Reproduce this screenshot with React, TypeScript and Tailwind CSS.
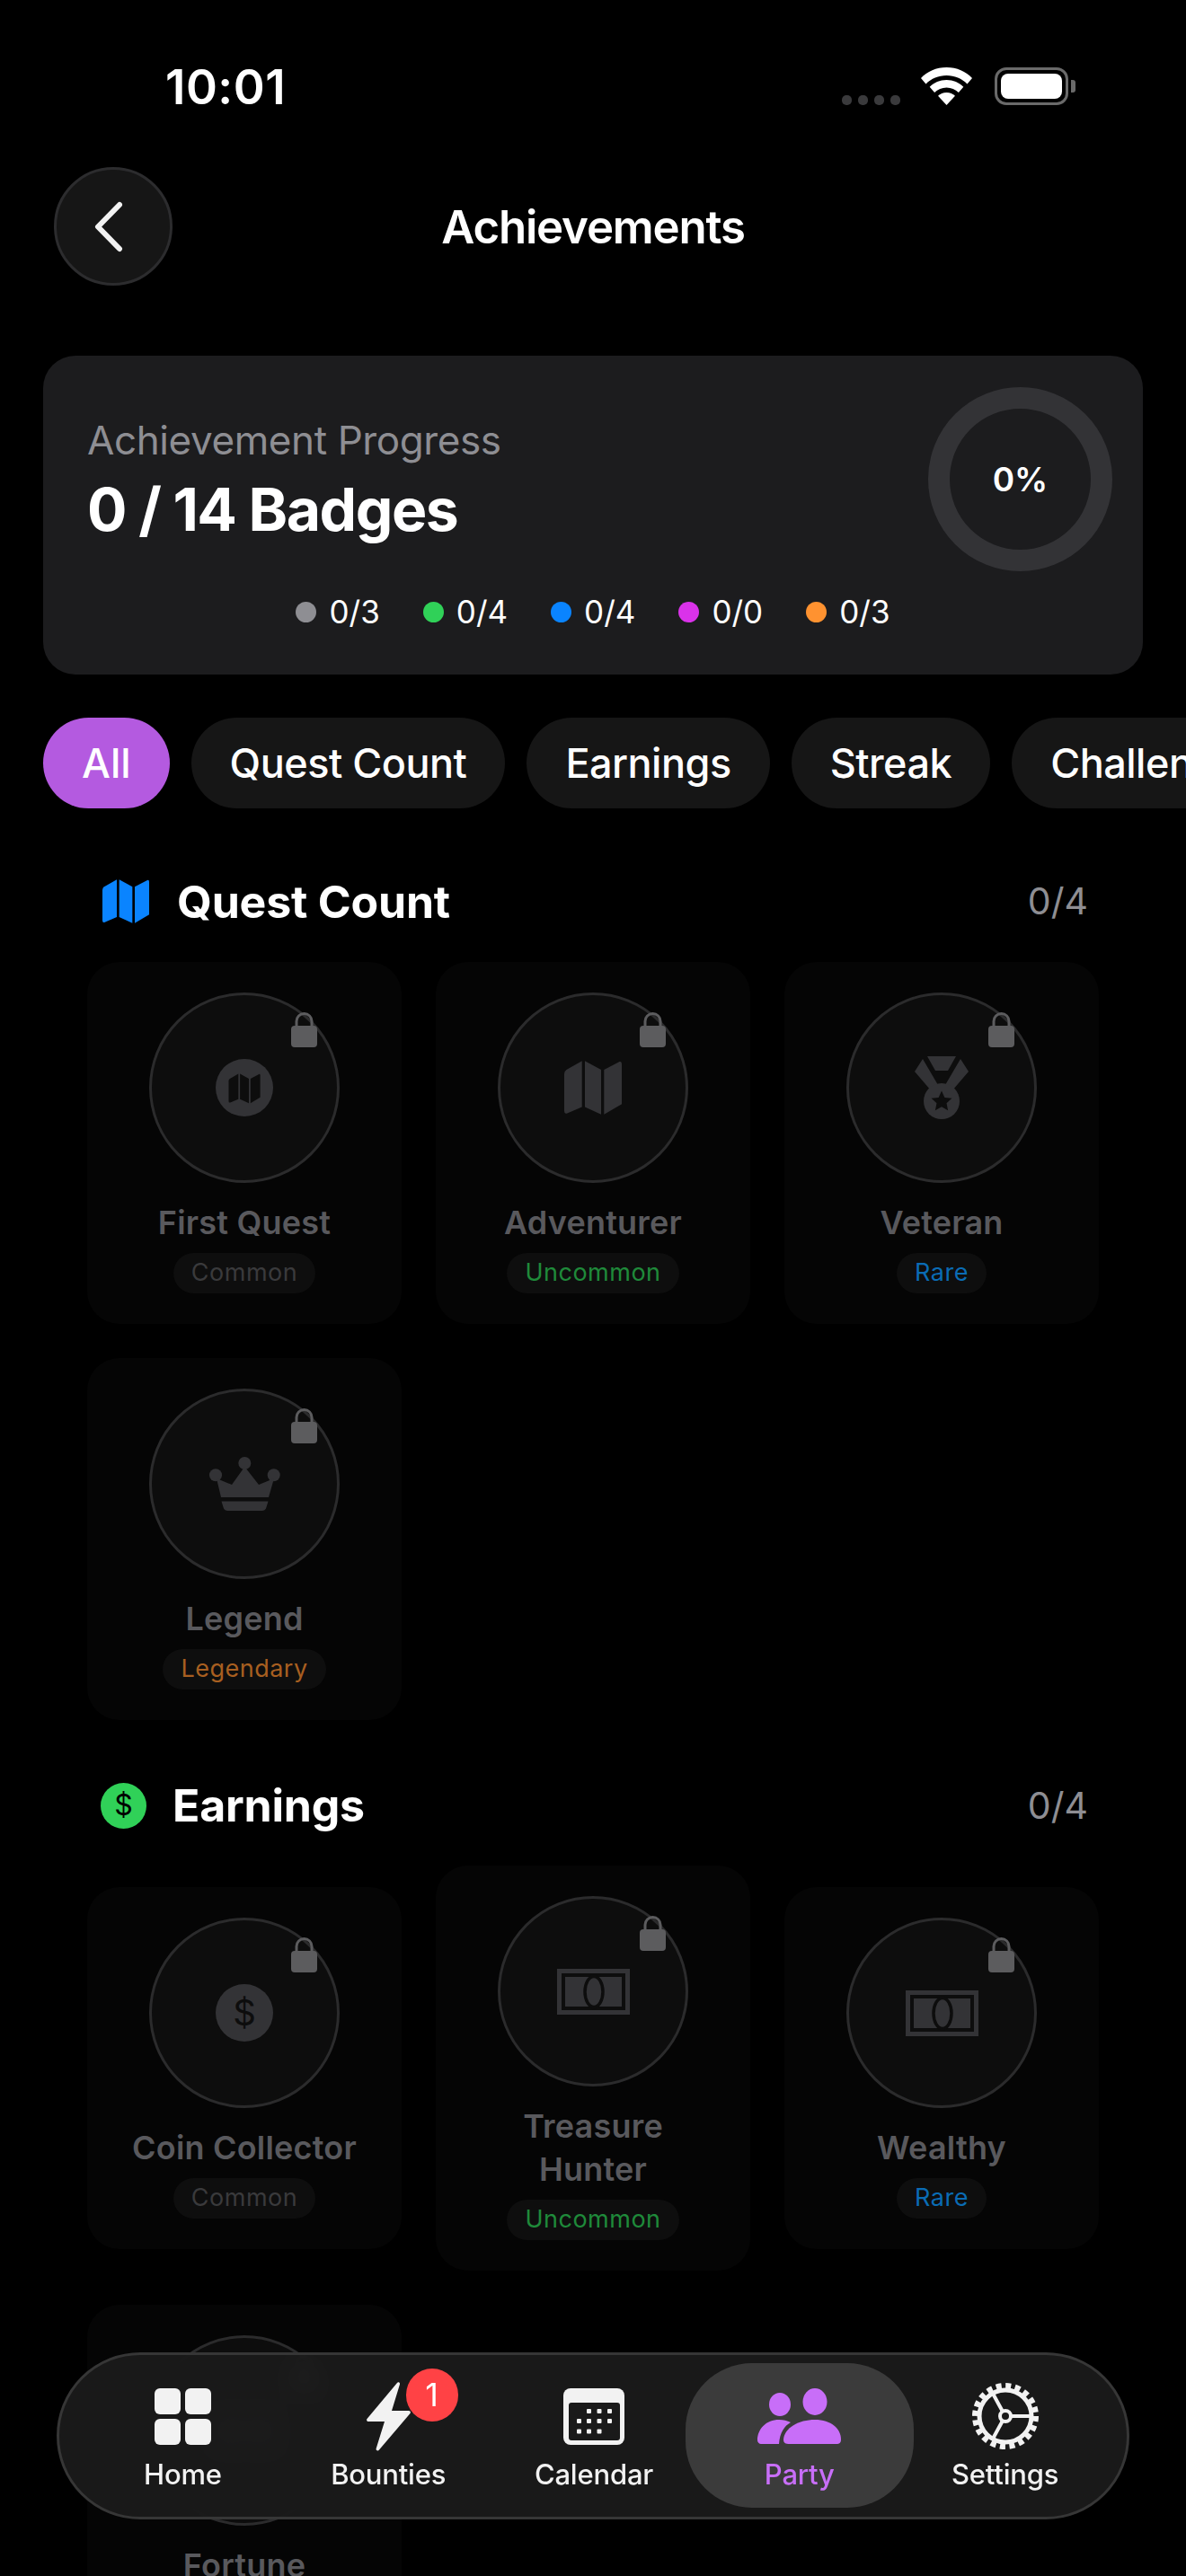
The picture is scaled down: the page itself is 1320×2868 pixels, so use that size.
import type { ReactNode } from "react";

const FONT = "font-['Inter','Liberation_Sans',sans-serif]";

const MapIcon = ({ className }: { className?: string }) => (
  <svg viewBox="0 0 156 145" className={className} fill="currentColor">
    <path d="M0 35Q0 28 6 24L48 0V125L8 142Q0 145 0 136z" />
    <path d="M56 0L100 24V145L56 125z" />
    <path d="M108 24L150 2Q156 0 156 8V117L108 145z" />
  </svg>
);

const LockIcon = () => (
  <svg viewBox="0 0 29 40" className="absolute top-[18px] right-[22px] w-[29px] h-[40px]">
    <path d="M6 19v-8a8.500 8.500 0 0 1 17 0v8" fill="none" stroke="#5c5c5e" strokeWidth="3" />
    <rect x="0" y="16" width="29" height="24" rx="4" fill="#5c5c5e" />
  </svg>
);

const MapCircle = () => (
  <svg viewBox="0 0 64 64" className="w-[64px] h-[64px]">
    <circle cx="32" cy="32" r="32" fill="#333336" />
    <g transform="translate(14.500 16.500) scale(0.225)" fill="#0d0d0d">
      <path d="M0 35Q0 28 6 24L48 0V125L8 142Q0 145 0 136z" />
      <path d="M56 0L100 24V145L56 125z" />
      <path d="M108 24L150 2Q156 0 156 8V117L108 145z" />
    </g>
  </svg>
);

const Medal = () => (
  <svg viewBox="0 0 60 70" className="w-[60px] h-[70px]" fill="#333336">
    <path d="M14 0h32l-9 16H23z" />
    <path d="M9 3l17 29c-3 1-6 3-8 6L0 17zM51 3L34 32c3 1 6 3 8 6l18-21z" />
    <circle cx="30" cy="50" r="20" />
    <path d="M30 38.500l3.400 7.400 8 .9-5.900 5.500 1.600 8-7.100-4-7.100 4 1.600-8-5.900-5.500 8-.9z" fill="#0d0d0d" />
  </svg>
);

const Crown = () => (
  <svg viewBox="0 0 79 60" className="w-[79px] h-[60px]" fill="#333336">
    <circle cx="39.300" cy="7" r="7" />
    <circle cx="7" cy="20.300" r="7" />
    <circle cx="71.700" cy="20.300" r="7" />
    <path d="M8 24L25 31L39.300 11L55 31L72 24L66 45H13z" />
    <path d="M13.500 49.500H65.500L63.500 56c-.5 2.500-2.500 4-5 4H20.500c-2.500 0-4.500-1.500-5-4z" />
  </svg>
);

const Coin = () => (
  <div className="w-[64px] h-[64px] rounded-full bg-[#333336] flex items-center justify-center text-[40px] leading-none text-[#0d0d0d]">
    $
  </div>
);

const Banknote = () => (
  <svg viewBox="0 0 81 51" className="w-[81px] h-[51px]">
    <rect width="81" height="51" fill="#333336" />
    <rect x="7" y="7" width="67" height="37" fill="#333336" stroke="#0d0d0d" strokeWidth="4" />
    <ellipse cx="41" cy="25.500" rx="10" ry="17" fill="none" stroke="#0d0d0d" strokeWidth="3.500" />
  </svg>
);

const Achievement = ({
  icon,
  name,
  rarity,
  rarityColor,
}: {
  icon: ReactNode;
  name: string;
  rarity: string;
  rarityColor: string;
}) => (
  <div className="flex flex-col items-center bg-[#050505] rounded-[36px] py-[34px] px-[40px]">
    <div className="relative w-[212px] h-[212px] rounded-full bg-[#0d0d0d] border-[3px] border-[#2b2b2c] flex items-center justify-center shrink-0">
      {icon}
      <LockIcon />
    </div>
    <p className="mt-5 -mx-[5px] text-[36px] leading-[48px] font-semibold tracking-[0.2px] text-[#59595d] text-center">
      {name}
    </p>
    <span className={`mt-[10px] h-[45px] px-5 rounded-full bg-[#0e0e0e] text-[27px] tracking-[0.5px] flex items-center ${rarityColor}`}>
      {rarity}
    </span>
  </div>
);

const SectionHeader = ({ icon, title }: { icon: ReactNode; title: string }) => (
  <div className="flex items-center justify-between pl-[15px] pr-[12px]">
    <div className="flex items-center">
      {icon}
      <h2 className="text-[50px] leading-[60px] font-bold tracking-[-0.2px] text-white">{title}</h2>
    </div>
    <span className="text-[41px] text-[#8e8e93]">0/4</span>
  </div>
);

const LEGEND = [
  { color: "bg-[#8e8e93]", text: "0/3" },
  { color: "bg-[#30d158]", text: "0/4" },
  { color: "bg-[#0a84ff]", text: "0/4" },
  { color: "bg-[#da32ea]", text: "0/0" },
  { color: "bg-[#ff9230]", text: "0/3" },
];

const CHIPS = ["Quest Count", "Earnings", "Streak", "Challenges"];

const NavItem = ({
  label,
  active,
  children,
}: {
  label: string;
  active?: boolean;
  children: ReactNode;
}) => (
  <div className="relative flex-1 flex flex-col items-center">
    {active && (
      <div className="absolute left-[-12px] right-[-13px] top-[-19px] h-[161px] rounded-[74px] bg-[#3b3b3b]" />
    )}
    <div className="relative h-[80px] flex items-center justify-center">{children}</div>
    <span className={`relative mt-[5px] text-[31px] leading-[40px] font-medium tracking-[-0.2px] ${active ? "text-[#c86ef8]" : "text-[#f2f2f2]"}`}>
      {label}
    </span>
  </div>
);

const App = () => {
  return (
    <div className={`relative w-[1320px] h-[2868px] overflow-hidden bg-black ${FONT}`}>
      {/* status bar */}
      <div className="flex items-center justify-between h-[42px] mt-[75px] pl-[184px] pr-[131px]">
        <span className="text-[53px] leading-[42px] font-semibold tracking-[0.5px] text-white pt-[2px]">10:01</span>
        <div className="flex items-start">
          <div className="flex gap-[7px] mt-[31px] mr-[23px]">
            <span className="w-[11px] h-[11px] rounded-[5px] bg-[#3a3a3c]" />
            <span className="w-[11px] h-[11px] rounded-[5px] bg-[#3a3a3c]" />
            <span className="w-[11px] h-[11px] rounded-[5px] bg-[#3a3a3c]" />
            <span className="w-[11px] h-[11px] rounded-[5px] bg-[#3a3a3c]" />
          </div>
          <svg viewBox="0 0 57 42" className="w-[57px] h-[42px] mr-[25px]" fill="#fff">
            <path d="M28.500 0C40 0 50 4.500 57 12l-5.500 6.500C45.500 12.500 37.500 9 28.500 9S11.500 12.500 5.500 18.500L0 12C7 4.500 17 0 28.500 0z" />
            <path d="M28.500 14c7.500 0 14 3 18.800 7.800l-5.400 6.300c-3.500-3.500-8.300-5.600-13.400-5.600s-9.900 2.100-13.400 5.600L9.700 21.800C14.500 17 21 14 28.500 14z" />
            <path d="M28.500 28c3.800 0 7 1.400 9.500 3.700L28.500 42 19 31.700c2.500-2.300 5.700-3.700 9.500-3.700z" />
          </svg>
          <div className="relative w-[82px] h-[42px] rounded-[13px] border-[3px] border-[#6a6a6a] p-[4px]">
            <div className="w-full h-full rounded-[8px] bg-white" />
            <div className="absolute right-[-11px] top-[11px] w-[5px] h-[14px] rounded-r-[3px] bg-[#6a6a6a]" />
          </div>
        </div>
      </div>

      {/* header */}
      <div className="relative flex items-center justify-center h-[132px] mt-[69px] px-[60px]">
        <button className="absolute left-[60px] top-0 w-[132px] h-[132px] rounded-full bg-[#161616] border-[3px] border-[#2c2c2e] flex items-center justify-center">
          <svg viewBox="0 0 32 57" className="w-[32px] h-[57px] mr-[10px]" fill="none" stroke="#f2f2f2" strokeWidth="6" strokeLinecap="round" strokeLinejoin="round">
            <path d="M28 4L4 28.500L28 53" />
          </svg>
        </button>
        <h1 className="text-[51px] font-semibold tracking-[-1.2px] text-white pt-[2px]">Achievements</h1>
      </div>

      {/* progress card */}
      <section className="mx-[48px] mt-[78px] h-[355px] rounded-[36px] bg-[#1c1c1e] relative pl-[49px] pt-[66px]">
        <p className="text-[44px] leading-[56px] tracking-[-0.4px] text-[#8e8e93]">Achievement Progress</p>
        <p className="mt-[11px] text-[66px] leading-[76px] font-bold tracking-[-1.5px] text-white">0 / 14 Badges</p>
        <div className="absolute right-[34px] top-[35px] w-[205px] h-[205px] rounded-full border-[24px] border-[#333336] flex items-center justify-center">
          <span className="text-[37px] font-semibold text-white">0%</span>
        </div>
        <div className="flex justify-center gap-[48px] mt-[52px] pr-[49px]">
          {LEGEND.map((item, i) => (
            <div key={i} className="flex items-center gap-[14px]">
              <span className={`w-[23px] h-[23px] rounded-full ${item.color}`} />
              <span className="text-[35px] leading-[48px] text-white">{item.text}</span>
            </div>
          ))}
        </div>
      </section>

      {/* filter chips */}
      <div className="flex gap-[24px] mt-[48px] pl-[48px] overflow-hidden">
        <span className="h-[101px] px-[43px] rounded-full bg-[#b45ae0] flex items-center text-[45px] font-medium text-white shrink-0">All</span>
        {CHIPS.map((chip) => (
          <span key={chip} className="h-[101px] px-[43px] rounded-full bg-[#161616] flex items-center text-[45px] font-medium tracking-[-0.5px] text-white shrink-0">
            {chip}
          </span>
        ))}
      </div>

      <div className="mx-[97px] mt-[73px]">
        <SectionHeader
          title="Quest Count"
          icon={<MapIcon className="w-[52px] h-[49px] text-[#0a84ff] ml-[2px] mr-[31px]" />}
        />
        <div className="grid grid-cols-[350px_350px_350px] gap-[38px] mt-[36px] items-center">
          <Achievement icon={<MapCircle />} name="First Quest" rarity="Common" rarityColor="text-[#3a3a3c]" />
          <Achievement
            icon={<MapIcon className="w-[64px] h-[60px] text-[#333336]" />}
            name="Adventurer"
            rarity="Uncommon"
            rarityColor="text-[#1f8a3a]"
          />
          <Achievement icon={<Medal />} name="Veteran" rarity="Rare" rarityColor="text-[#0a6cb5]" />
          <Achievement icon={<Crown />} name="Legend" rarity="Legendary" rarityColor="text-[#a85f20]" />
        </div>

        <div className="mt-[65px]">
          <SectionHeader
            title="Earnings"
            icon={
              <span className="w-[51px] h-[51px] rounded-full bg-[#30d158] flex items-center justify-center text-[32px] text-black mr-[29px]">
                $
              </span>
            }
          />
        </div>
        <div className="grid grid-cols-[350px_350px_350px] gap-[38px] mt-[36px] items-center">
          <Achievement icon={<Coin />} name="Coin Collector" rarity="Common" rarityColor="text-[#3a3a3c]" />
          <Achievement icon={<Banknote />} name="Treasure Hunter" rarity="Uncommon" rarityColor="text-[#1f8a3a]" />
          <Achievement icon={<Banknote />} name="Wealthy" rarity="Rare" rarityColor="text-[#0a6cb5]" />
          <Achievement icon={<Banknote />} name="Fortune" rarity="Rare" rarityColor="text-[#0a6cb5]" />
        </div>
      </div>

      {/* bottom nav */}
      <nav className="absolute left-[63px] top-[2619px] w-[1194px] h-[186px] rounded-[93px] border-[3px] border-[#363636] bg-[#1a1a1a]/95 backdrop-blur-md flex pl-[23px] pr-[21px] pt-[28px]">
        <NavItem label="Home">
          <svg viewBox="0 0 63 63" className="w-[63px] h-[63px]" fill="#f2f2f2">
            <rect width="29" height="29" rx="6" />
            <rect x="34" width="29" height="29" rx="6" />
            <rect y="34" width="29" height="29" rx="6" />
            <rect x="34" y="34" width="29" height="29" rx="6" />
          </svg>
        </NavItem>
        <NavItem label="Bounties">
          <div className="relative">
            <svg viewBox="0 0 49 77" className="w-[49px] h-[77px]" fill="#f2f2f2">
              <path d="M34 1c1-1.500 3.500-.5 3 1.500L28 32h19c1.500 0 2.500 1.500 1.500 3L14 75.500c-1.200 1.800-4 .8-3.300-1.500L20 44H2c-1.500 0-2.500-1.500-1.500-3z" />
            </svg>
            <span className="absolute left-[44px] top-[-15px] w-[58px] h-[59px] rounded-full bg-[#ff4245] flex items-center justify-center text-[36px] text-white">
              1
            </span>
          </div>
        </NavItem>
        <NavItem label="Calendar">
          <svg viewBox="0 0 68 63" className="w-[68px] h-[63px]">
            <rect width="68" height="63" rx="8" fill="#f2f2f2" />
            <rect x="6" y="16" width="57" height="42" rx="3" fill="#1a1a1a" />
            <g fill="#f2f2f2">
              <rect x="26" y="23" width="5" height="5" rx="1" />
              <rect x="37.500" y="23" width="5" height="5" rx="1" />
              <rect x="49" y="23" width="5" height="5" rx="1" />
              <rect x="15" y="34" width="5" height="5" rx="1" />
              <rect x="26" y="34" width="5" height="5" rx="1" />
              <rect x="37.500" y="34" width="5" height="5" rx="1" />
              <rect x="49" y="34" width="5" height="5" rx="1" />
              <rect x="15" y="45.500" width="5" height="5" rx="1" />
              <rect x="26" y="45.500" width="5" height="5" rx="1" />
              <rect x="37.500" y="45.500" width="5" height="5" rx="1" />
            </g>
          </svg>
        </NavItem>
        <NavItem label="Party" active>
          <svg viewBox="0 0 93 62" className="w-[93px] h-[62px]" fill="#c86ef8">
            <ellipse cx="25" cy="18" rx="12" ry="13" />
            <ellipse cx="64" cy="15" rx="13.500" ry="15" />
            <path d="M0 58c0-13 10-23 24-23 5 0 9 1 13 3-7 4-12 11-13 24H4c-2 0-4-2-4-4z" />
            <path d="M36 62c-5 0-7-1-7-5 1-13 17-22 35-22s29 10 29 22c0 4-2 5-5 5z" />
          </svg>
        </NavItem>
        <NavItem label="Settings">
          <svg viewBox="0 0 76 76" className="w-[76px] h-[76px]" fill="none" stroke="#f2f2f2">
            <circle cx="38" cy="38" r="29" strokeWidth="5" />
            <circle cx="38" cy="38" r="33.500" strokeWidth="7" strokeDasharray="6 4.520" />
            <circle cx="38" cy="38" r="6" strokeWidth="4" />
            <path d="M44 38h25M35 33 23 11M35 43 23 65" strokeWidth="4" />
          </svg>
        </NavItem>
      </nav>
    </div>
  );
};

export default App;
